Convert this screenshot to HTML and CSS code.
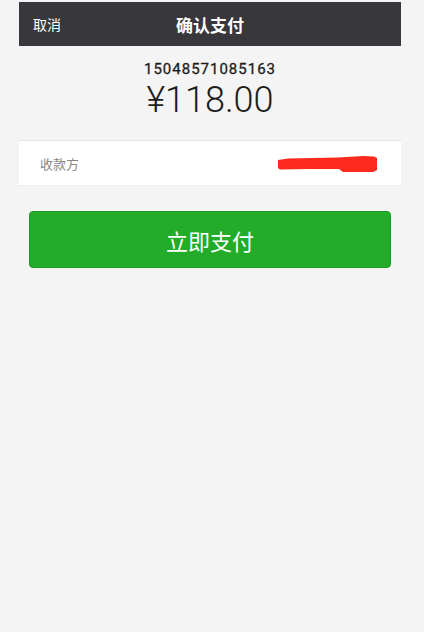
FILE: index.html
```html
<!DOCTYPE html>
<html lang="zh-CN">
<head>
    <meta charset="utf-8">
    <title>确认支付</title>
    <link rel="stylesheet" href="styles.css">
</head>
<body>
    <div class="page">
        <header class="topbar">
            <a class="cancel" href="#">取消</a>
            <h1>确认支付</h1>
        </header>

        <div class="order">
            <div class="order-no">15048571085163</div>
            <div class="amount">¥118.00</div>
        </div>

        <div class="row">
            <span class="label">收款方</span>
            <svg class="scribble" width="100" height="17" viewBox="0 0 100 17">
                <path d="M0 4 L10 2.5 L60 1.5 L85 0 L96 0.5 L99 2 L99 14 L95 16 L65 16 L61 13 L30 13 L2 13.5 L0 12 Z" fill="#fb2a1c"/>
            </svg>
        </div>

        <div class="actions">
            <button class="pay-button">立即支付</button>
        </div>
    </div>
</body>
</html>
```

FILE: styles.css
```css
body {
    margin: 0;
    padding: 0;
    background-color: #f4f4f4;
    font-family: Roboto, "Noto Sans CJK SC", sans-serif;
}

.page {
    width: 382px;
    margin-left: 19px;
    padding-top: 2px;
}

.topbar {
    position: relative;
    height: 44px;
    background-color: #38373c;
    color: #fff;
    display: flex;
    align-items: center;
    justify-content: center;
}

.topbar h1 {
    margin: 0;
    font-size: 17px;
    font-weight: bold;
    font-family: "Noto Sans CJK SC", sans-serif;
}

.cancel {
    position: absolute;
    left: 14px;
    top: 0;
    line-height: 44px;
    color: #fff;
    text-decoration: none;
    font-size: 14px;
    font-family: "Noto Sans CJK SC", sans-serif;
}

.order {
    text-align: center;
    padding-top: 13px;
    height: 81px;
    color: #1c1c1c;
}

.order-no {
    font-size: 15px;
    font-weight: 400;
    letter-spacing: 1px;
    line-height: 20px;
    -webkit-text-stroke: 0.3px #1c1c1c;
}

.amount {
    font-size: 36px;
    font-weight: 300;
    line-height: 42px;
}

.row {
    display: flex;
    align-items: center;
    height: 44px;
    padding: 0 23px 0 21px;
    background-color: #fff;
    border-top: 1px solid #e4e4e4;
    border-bottom: 1px solid #ececec;
}

.label {
    font-size: 13px;
    color: #888;
    font-family: "Noto Sans CJK SC", sans-serif;
}

.scribble {
    margin-left: auto;
    margin-top: 3px;
}

.actions {
    padding: 25px 10px;
}

.pay-button {
    display: block;
    width: 100%;
    height: 57px;
    background-color: #22ac29;
    border: 1px solid #1c9a23;
    border-radius: 4px;
    color: #fff;
    font-size: 22px;
    font-family: "Noto Sans CJK SC", sans-serif;
    cursor: pointer;
}
```
